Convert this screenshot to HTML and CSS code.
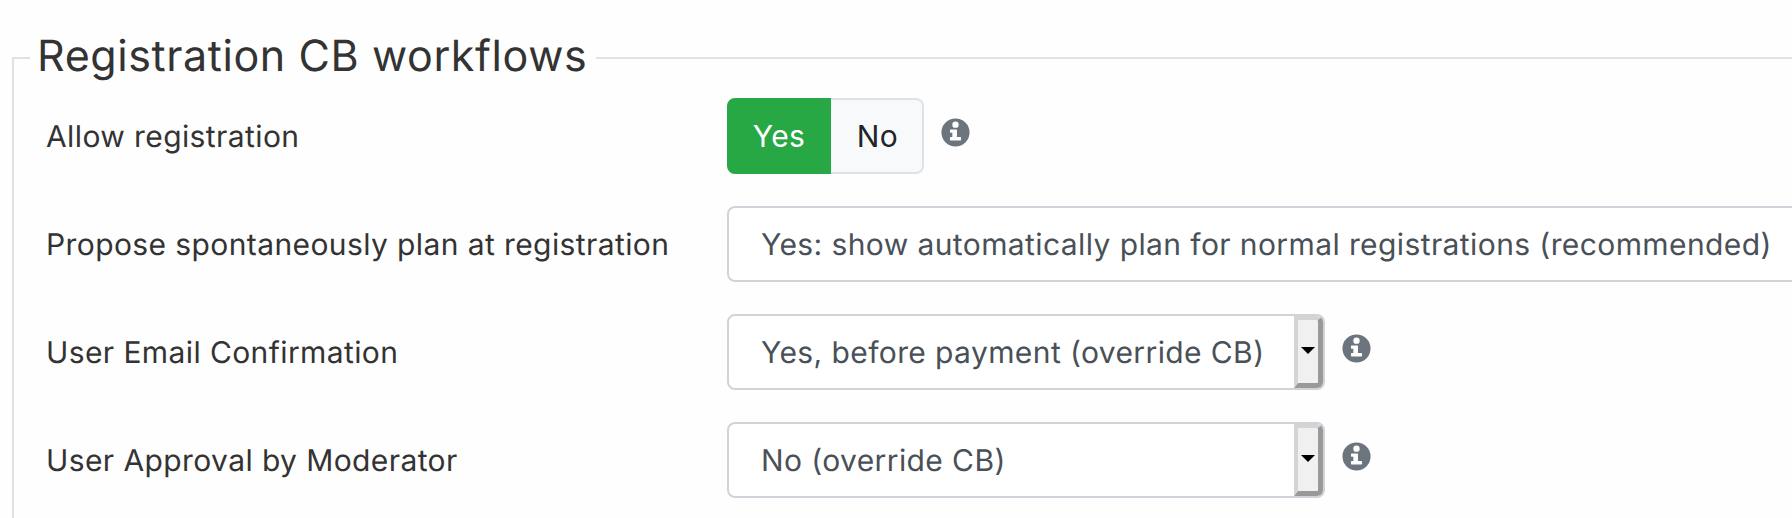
FILE: index.html
```html
<!DOCTYPE html>
<html lang="en">
<head>
<meta charset="utf-8">
<title>Registration CB workflows</title>
<link rel="stylesheet" href="styles.css">
</head>
<body>
<fieldset class="panel">
  <legend class="panel-title">Registration CB workflows</legend>
  <div class="rows">
    <div class="row">
      <label class="row-label">Allow registration</label>
      <div class="row-field">
        <div class="toggle">
          <button type="button" class="toggle-btn toggle-yes">Yes</button>
          <button type="button" class="toggle-btn toggle-no">No</button>
        </div>
        <svg class="info" viewBox="0 0 512 512"><path fill-rule="evenodd" d="M256 8a248 248 0 1 0 0 496a248 248 0 1 0 0-496zM256 62a56 56 0 1 1 0 112a56 56 0 1 1 0-112zM170 204h100q12 0 12 12v120h60q12 0 12 12v36q0 12-12 12h-172q-12 0-12-12v-36q0-12 12-12h30v-76h-30q-12 0-12-12v-32q0-12 12-12z"/></svg>
      </div>
    </div>
    <div class="row">
      <label class="row-label">Propose spontaneously plan at registration</label>
      <div class="row-field">
        <div class="select select-wide"><span class="select-value">Yes: show automatically plan for normal registrations (recommended)</span></div>
      </div>
    </div>
    <div class="row">
      <label class="row-label">User Email Confirmation</label>
      <div class="row-field">
        <div class="select"><span class="select-value">Yes, before payment (override CB)</span><span class="spinner"><span class="arrow"></span></span></div>
        <svg class="info" viewBox="0 0 512 512"><path fill-rule="evenodd" d="M256 8a248 248 0 1 0 0 496a248 248 0 1 0 0-496zM256 62a56 56 0 1 1 0 112a56 56 0 1 1 0-112zM170 204h100q12 0 12 12v120h60q12 0 12 12v36q0 12-12 12h-172q-12 0-12-12v-36q0-12 12-12h30v-76h-30q-12 0-12-12v-32q0-12 12-12z"/></svg>
      </div>
    </div>
    <div class="row">
      <label class="row-label">User Approval by Moderator</label>
      <div class="row-field">
        <div class="select"><span class="select-value">No (override CB)</span><span class="spinner"><span class="arrow"></span></span></div>
        <svg class="info" viewBox="0 0 512 512"><path fill-rule="evenodd" d="M256 8a248 248 0 1 0 0 496a248 248 0 1 0 0-496zM256 62a56 56 0 1 1 0 112a56 56 0 1 1 0-112zM170 204h100q12 0 12 12v120h60q12 0 12 12v36q0 12-12 12h-172q-12 0-12-12v-36q0-12 12-12h30v-76h-30q-12 0-12-12v-32q0-12 12-12z"/></svg>
      </div>
    </div>
  </div>
</fieldset>
</body>
</html>
```
FILE: styles.css
```css
html, body {
  margin: 0;
  height: 518px;
  overflow: hidden;
  background: #fefefe;
}
body {
  font-family: Inter, "Noto Sans", sans-serif;
  color: #333;
  text-rendering: geometricPrecision;
}
.panel {
  margin: 30px 0 0 12px;
  padding: 0;
  width: 2000px;
  min-height: 520px;
  border: 2px solid #dee2e6;
  box-sizing: border-box;
}
.panel-title {
  margin-left: 16px;
  padding: 0 9px 4px 7px;
  font-size: 43px;
  letter-spacing: 0.6px;
  line-height: 52px;
  font-weight: 400;
  color: #333;
}
.rows {
  display: flex;
  flex-direction: column;
  gap: 32px;
  padding: 12px 0 0 32px;
}
.row {
  display: flex;
  align-items: center;
  height: 76px;
}
.row-label {
  width: 681px;
  flex: none;
  padding-top: 2px;
  font-size: 30px;
  letter-spacing: 0.4px;
}
.row-field {
  display: flex;
  align-items: center;
  gap: 17px;
  height: 100%;
}
.toggle {
  display: flex;
  height: 76px;
}
.toggle-btn {
  font-family: inherit;
  font-size: 30px;
  letter-spacing: 0.4px;
  padding: 0;
  height: 100%;
  box-sizing: border-box;
  border: 2px solid #dee2e6;
}
.toggle-yes {
  width: 104px;
  color: #fff;
  background: #28a745;
  border-color: #28a745;
  border-radius: 8px 0 0 8px;
}
.toggle-no {
  width: 93px;
  padding-left: 2px;
  color: #212529;
  background: #f8f9fa;
  border-left: 0;
  border-radius: 0 8px 8px 0;
}
.select {
  position: relative;
  display: flex;
  align-items: center;
  box-sizing: border-box;
  width: 598px;
  height: 76px;
  padding: 2px 0 0 32px;
  background: #fff;
  border: 2px solid #ced4da;
  border-radius: 8px;
  font-size: 30px;
  letter-spacing: 0.4px;
  color: #495057;
}
.select-wide {
  width: 1200px;
}
.spinner {
  position: absolute;
  top: 0;
  right: 0;
  bottom: 0;
  width: 29px;
  box-sizing: border-box;
  display: flex;
  align-items: center;
  justify-content: center;
  background: #f0f0f0;
  border-style: solid;
  border-width: 4px 5px 5px 4px;
  border-color: #d4d4d4 #999 #999 #d4d4d4;
  border-radius: 0 6px 6px 0;
}
.arrow {
  width: 0;
  height: 0;
  margin-bottom: 2px;
  border-style: solid;
  border-width: 7px 7px 0;
  border-color: #000 transparent transparent;
}
.info {
  width: 29px;
  height: 29px;
  margin-bottom: 7px;
  fill: #6c757d;
}
```
